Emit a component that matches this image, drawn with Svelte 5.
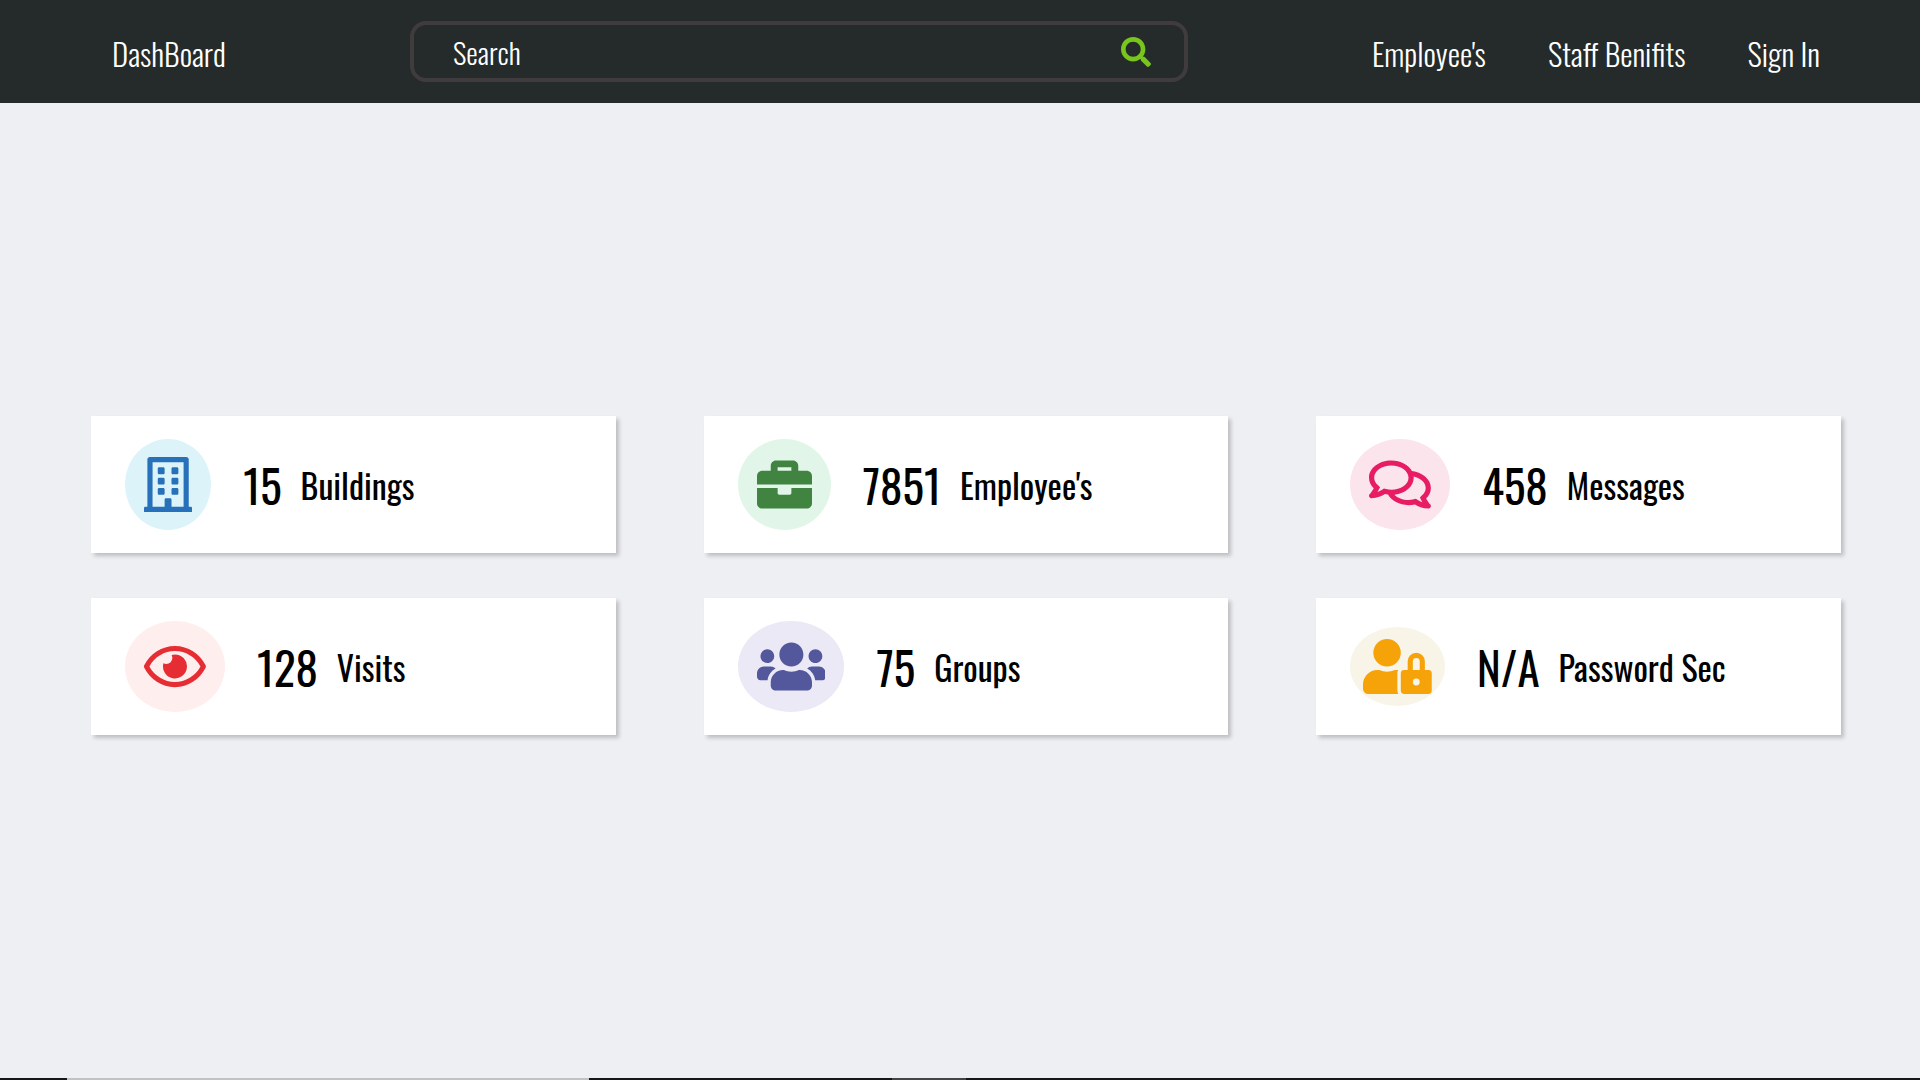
<script>
  const cards = [
    {
      value: '15', label: 'Buildings', tone: 'blue', width: 448,
      path: 'M128 148v-40c0-6.600 5.400-12 12-12h40c6.600 0 12 5.400 12 12v40c0 6.600-5.400 12-12 12h-40c-6.600 0-12-5.400-12-12zm140 12h40c6.600 0 12-5.400 12-12v-40c0-6.600-5.400-12-12-12h-40c-6.600 0-12 5.400-12 12v40c0 6.600 5.400 12 12 12zm-128 96h40c6.600 0 12-5.400 12-12v-40c0-6.600-5.400-12-12-12h-40c-6.600 0-12 5.400-12 12v40c0 6.600 5.400 12 12 12zm128 0h40c6.600 0 12-5.400 12-12v-40c0-6.600-5.400-12-12-12h-40c-6.600 0-12 5.400-12 12v40c0 6.600 5.400 12 12 12zm-76 84v-40c0-6.600-5.400-12-12-12h-40c-6.600 0-12 5.400-12 12v40c0 6.600 5.400 12 12 12h40c6.600 0 12-5.400 12-12zm76 12h40c6.600 0 12-5.400 12-12v-40c0-6.600-5.400-12-12-12h-40c-6.600 0-12 5.400-12 12v40c0 6.600 5.400 12 12 12zm180 124v36H0v-36c0-6.600 5.400-12 12-12h19.500V24c0-13.300 10.700-24 24-24h337c13.300 0 24 10.700 24 24v440H436c6.600 0 12 5.400 12 12zM79.500 463H192v-67c0-6.600 5.400-12 12-12h40c6.600 0 12 5.400 12 12v67h112.500V49L80 48l-.5 415z'
    },
    {
      value: '7851', label: "Employee's", tone: 'green', width: 512,
      path: 'M320 336c0 8.840-7.160 16-16 16h-96c-8.840 0-16-7.160-16-16v-48H0v144c0 25.600 22.400 48 48 48h416c25.600 0 48-22.400 48-48V288H320v48zm144-208h-80V80c0-25.600-22.400-48-48-48H176c-25.600 0-48 22.400-48 48v48H48c-25.600 0-48 22.400-48 48v80h512v-80c0-25.600-22.400-48-48-48zm-144 0H192V96h128v32z'
    },
    {
      value: '458', label: 'Messages', tone: 'pink', width: 576,
      path: 'M532 386.200c27.500-27.100 44-61.100 44-98.200 0-80-76.500-146.100-176.200-157.900C368.300 72.500 294.300 32 208 32 93.100 32 0 103.600 0 192c0 37 16.500 71 44 98.200-15.300 30.700-37.300 54.500-37.700 54.900-6.300 6.700-8.100 16.500-4.400 25 3.600 8.500 12 14 21.200 14 53.500 0 96.700-20.200 125.200-38.800 9.200 2.100 18.700 3.700 28.400 4.900C208.100 407.600 281.800 448 368 448c20.800 0 40.800-2.400 59.800-6.800C456.300 459.700 499.400 480 553 480c9.200 0 17.500-5.500 21.200-14 3.600-8.500 1.900-18.300-4.400-25-.4-.3-22.500-24.100-37.800-54.800zm-392.800-92.300L122.100 305c-14.100 9.100-28.500 16.300-43.100 21.400 2.700-4.700 5.400-9.700 8-14.800l15.500-31.100L77.700 256C64.200 242.600 48 220.700 48 192c0-60.700 73.300-112 160-112s160 51.300 160 112-73.300 112-160 112c-16.500 0-33-1.900-49-5.600l-19.800-4.500zM498.300 352l-24.700 24.400 15.500 31.100c2.600 5.100 5.300 10.100 8 14.800-14.600-5.100-29-12.300-43.100-21.400l-17.100-11.100-19.900 4.600c-16 3.700-32.500 5.600-49 5.600-54 0-102.200-20.100-131.300-49.700C338 339.500 416 272.900 416 192c0-3.400-.4-6.700-.7-10C479.700 196.500 528 238.800 528 288c0 28.700-16.200 50.600-29.700 64z'
    },
    {
      value: '128', label: 'Visits', tone: 'red', width: 576,
      path: 'M288 144a110.940 110.940 0 0 0-31.240 5 55.400 55.400 0 0 1 7.240 27 56 56 0 0 1-56 56 55.400 55.400 0 0 1-27-7.240A111.710 111.710 0 1 0 288 144zm284.520 97.400C518.290 135.590 410.930 64 288 64S57.680 135.640 3.480 241.410a32.350 32.350 0 0 0 0 29.190C57.710 376.410 165.070 448 288 448s230.320-71.640 284.520-177.410a32.350 32.350 0 0 0 0-29.190zM288 400c-98.650 0-189.090-55-237.930-144C98.910 167 189.340 112 288 112s189.090 55 237.930 144C477.100 345 386.660 400 288 400z'
    },
    {
      value: '75', label: 'Groups', tone: 'violet', width: 640,
      path: 'M96 224c35.300 0 64-28.700 64-64s-28.700-64-64-64-64 28.700-64 64 28.700 64 64 64zm448 0c35.300 0 64-28.700 64-64s-28.700-64-64-64-64 28.700-64 64 28.700 64 64 64zm32 32h-64c-17.600 0-33.500 7.100-45.100 18.600 40.300 22.100 68.900 62 75.100 109.400h66c17.700 0 32-14.300 32-32v-32c0-35.300-28.700-64-64-64zm-256 0c61.900 0 112-50.100 112-112S381.900 32 320 32 208 82.100 208 144s50.100 112 112 112zm76.800 32h-8.300c-20.800 10-43.900 16-68.500 16s-47.600-6-68.500-16h-8.300C179.600 288 128 339.600 128 403.200V432c0 26.500 21.500 48 48 48h288c26.500 0 48-21.500 48-48v-28.800c0-63.600-51.600-115.200-115.200-115.200zm-223.700-13.400C161.500 263.100 145.600 256 128 256H64c-35.300 0-64 28.700-64 64v32c0 17.700 14.300 32 32 32h65.900c6.300-47.400 34.900-87.300 75.200-109.400z'
    },
    {
      value: 'N/A', label: 'Password Sec', tone: 'amber', width: 640,
      path: 'M224 256A128 128 0 1 0 96 128a128 128 0 0 0 128 128zm96 64a63.080 63.080 0 0 1 8.100-30.500c-4.800-.5-9.500-1.500-14.500-1.500h-16.700a174.080 174.080 0 0 1-145.800 0h-16.700A134.430 134.430 0 0 0 0 422.400V464a48 48 0 0 0 48 48h280.900a63.540 63.540 0 0 1-8.900-32zm288-32h-32v-80a80 80 0 0 0-160 0v80h-32a32 32 0 0 0-32 32v160a32 32 0 0 0 32 32h224a32 32 0 0 0 32-32V320a32 32 0 0 0-32-32zM496 432a32 32 0 1 1 32-32 32 32 0 0 1-32 32zm32-144h-64v-80a32 32 0 0 1 64 0z'
    }
  ];
  const links = ["Employee's", 'Staff Benifits', 'Sign In'];
</script>

<div class="page">
  <header>
    <a class="brand" href="#home">DashBoard</a>
    <form class="search" onsubmit={(e) => e.preventDefault()}>
      <input type="text" placeholder="Search" aria-label="Search" />
      <button type="submit" aria-label="Submit search">
        <svg viewBox="0 0 512 512" aria-hidden="true"><path d="M505 442.700L405.300 343c-4.500-4.500-10.600-7-17-7H372c27.600-35.300 44-79.700 44-128C416 93.100 322.900 0 208 0S0 93.100 0 208s93.100 208 208 208c48.300 0 92.700-16.400 128-44v16.300c0 6.400 2.500 12.500 7 17l99.700 99.700c9.400 9.400 24.600 9.400 33.900 0l28.300-28.300c9.400-9.400 9.400-24.600.1-34zM208 336c-70.700 0-128-57.200-128-128 0-70.700 57.200-128 128-128 70.700 0 128 57.200 128 128 0 70.700-57.200 128-128 128z" /></svg>
      </button>
    </form>
    <nav>
      {#each links as link}
        <a href="#{link.toLowerCase().replace(/[^a-z]/g, '')}">{link}</a>
      {/each}
    </nav>
  </header>

  <main>
    {#each cards as card}
      <section class="card">
        <span class="badge {card.tone}">
          <svg viewBox="0 0 {card.width} 512" aria-hidden="true"><path d={card.path} /></svg>
        </span>
        <span class="value">{card.value}</span>
        <span class="label">{card.label}</span>
      </section>
    {/each}
  </main>

  <footer><span class="light"></span><span class="dark"></span><span class="mid"></span></footer>
</div>

<style>
  :global(body) {
    margin: 0;
  }
  .page {
    min-height: 100vh;
    display: flex;
    flex-direction: column;
    background: #eeeff3;
    color: #000;
    font-family: 'Oswald', 'Liberation Sans Narrow', 'Liberation Sans', sans-serif;
  }
  header {
    box-sizing: border-box;
    min-height: 103px;
    padding: 0 100px 0 112px;
    display: flex;
    align-items: center;
    background: #242b2a;
  }
  header a {
    color: #fff;
    text-decoration: none;
    font-size: 31px;
    font-weight: 300;
    line-height: 40px;
    padding-top: 2px;
    white-space: nowrap;
  }
  .brand {
    flex: 0 0 298px;
  }
  .search {
    box-sizing: border-box;
    flex: 0 1 778px;
    height: 61px;
    padding: 0 33px 0 39px;
    display: flex;
    align-items: center;
    border: 4px solid #403c3d;
    border-radius: 16px;
  }
  input {
    flex: 1;
    min-width: 0;
    padding: 0;
    border: 0;
    outline: 0;
    background: none;
    color: #fff;
    font: inherit;
    font-size: 29px;
    font-weight: 300;
    line-height: 40px;
  }
  input::placeholder {
    color: #fff;
    opacity: 1;
  }
  button {
    padding: 0;
    border: 0;
    background: none;
    display: flex;
    cursor: pointer;
  }
  button svg {
    width: 30px;
    height: 30px;
    fill: #78c51c;
  }
  nav {
    margin-left: auto;
    display: flex;
    gap: 62px;
  }
  main {
    flex: 1;
    padding: 0 79px 30px 91px;
    display: grid;
    grid-template-columns: repeat(3, 1fr);
    gap: 45px 88px;
    align-content: center;
  }
  .card {
    box-sizing: border-box;
    min-height: 137px;
    padding: 0 34px;
    display: flex;
    align-items: center;
    background: #fff;
    box-shadow: 3px 3px 4px rgba(0, 0, 0, 0.2);
  }
  .badge {
    display: flex;
    flex: none;
    padding: 18px 19px;
    border-radius: 50%;
    margin-right: 32px;
  }
  .badge svg {
    display: block;
    height: 55px;
    fill: currentColor;
  }
  .blue { background: #dcf3f9; color: #2770ba; }
  .green { background: #e1f6e8; color: #418442; }
  .pink { background: #fbe4ec; color: #e81c63; }
  .red { background: #ffeeee; color: #e52d33; }
  .violet { background: #ebe9f6; color: #53579c; }
  .amber { background: #f8f4e8; color: #f6a30a; padding: 12px 13px; }
  .value {
    font-size: 45px;
    line-height: 60px;
    margin-right: 19px;
  }
  .label {
    font-size: 34px;
    line-height: 60px;
    white-space: nowrap;
  }
  footer {
    height: 2px;
    padding-left: 67px;
    display: flex;
    background: #17161b;
  }
  .light { flex: 0 0 522px; background: #c2c2c4; }
  .dark { flex: 0 0 303px; }
  .mid { flex: 0 0 74px; background: #454347; }
</style>
